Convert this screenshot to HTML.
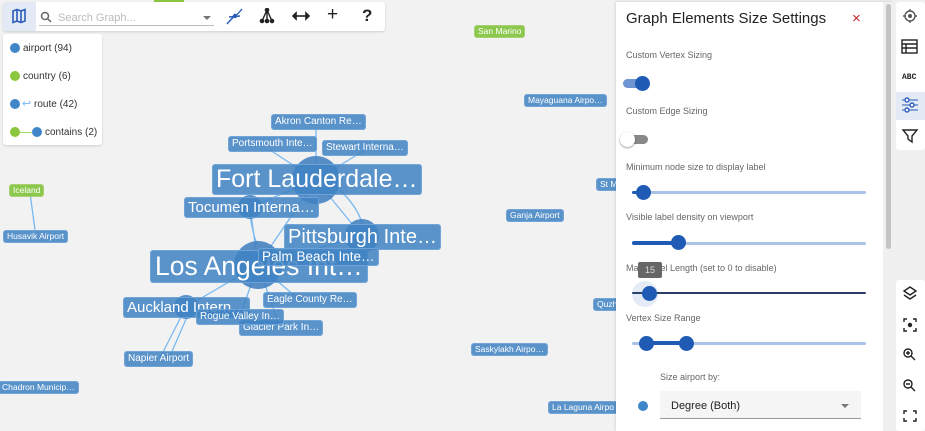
<!DOCTYPE html>
<html><head><style>
*{box-sizing:border-box;margin:0;padding:0}
body{width:925px;height:431px;overflow:hidden;background:#f2f2f2;font-family:"Liberation Sans",sans-serif;position:relative}
.l{position:absolute;background:rgba(64,130,195,.85);color:#fff;border-radius:3px;white-space:nowrap;line-height:1;padding:1px 3px;font-size:10px;border:1px solid rgba(120,170,220,.8)}
.g{background:rgba(130,195,60,.9);border-color:#a8d070}
.c{position:absolute;border-radius:50%;background:rgba(60,125,190,.85)}
.lbl{position:absolute;left:11px;font-size:11px;color:#666}
.sl{position:absolute;left:632px;width:234px;height:3px;background:#a9c2e6;border-radius:2px}
.th{position:absolute;width:15px;height:15px;border-radius:50%;background:#1f5bb5}
</style></head><body>
<svg width="925" height="431" style="position:absolute;left:0;top:0" fill="none" stroke="#7ab8f0" stroke-width="1.3">
<path d="M316 180 L316 128 M316 180 L270 150 M316 180 L365 150 M316 180 L250 207 M316 180 L362 236 M258 265 L250 207 M258 265 L316 180 M258 265 L362 236 M258 265 L186 307 M258 265 L300 300 M258 265 L240 316 M258 265 L280 327 M186 307 L160 358 M190 310 L170 356 M30 193 L35 230"/>
<path d="M340 190 Q360 210 362 225 M250 215 Q254 240 258 245" />
</svg>
<div class="c" style="left:292px;top:156px;width:48px;height:48px"></div>
<div class="c" style="left:234px;top:241px;width:48px;height:48px"></div>
<div class="c" style="left:345px;top:219px;width:34px;height:34px"></div>
<div class="c" style="left:238px;top:195px;width:24px;height:24px"></div>
<div class="c" style="left:174px;top:295px;width:24px;height:24px"></div>
<div class="l g" style="left:474px;top:25px;font-size:8.5px">San Marino</div>
<div class="l" style="left:524px;top:94px;font-size:8.5px">Mayaguana Airpo…</div>
<div class="l" style="left:596px;top:178px;font-size:8.5px">St M</div>
<div class="l" style="left:506px;top:209px;font-size:8.5px">Ganja Airport</div>
<div class="l g" style="left:9px;top:184px;font-size:8.5px">Iceland</div>
<div class="l" style="left:3px;top:230px;font-size:8.5px">Husavik Airport</div>
<div class="l" style="left:593px;top:298px;font-size:8.5px">Quzh</div>
<div class="l" style="left:471px;top:343px;font-size:8.5px">Saskylakh Airpo…</div>
<div class="l" style="left:-2px;top:381px;font-size:8.5px">Chadron Municip…</div>
<div class="l" style="left:548px;top:401px;font-size:8.5px">La Laguna Airpo</div>
<div class="l" style="left:271px;top:114px;font-size:10px;padding:2px 3px">Akron Canton Re…</div>
<div class="l" style="left:228px;top:136px;font-size:10px;padding:2px 3px">Portsmouth Inte…</div>
<div class="l" style="left:322px;top:140px;font-size:10px;padding:2px 3px">Stewart Interna…</div>
<div class="l" style="left:212px;top:164px;font-size:25px;padding:2px 3px">Fort Lauderdale…</div>
<div class="l" style="left:184px;top:197px;font-size:15px;padding:2px 3px">Tocumen Interna…</div>
<div class="l" style="left:284px;top:224px;font-size:20px;padding:2px 3px">Pittsburgh Inte…</div>
<div class="l" style="left:150px;top:250px;font-size:26.5px;padding:2px 4px">Los Angeles Int…</div>
<div class="l" style="left:258px;top:248px;font-size:13.5px;padding:1px 3px">Palm Beach Inte…</div>
<div class="l" style="left:123px;top:297px;font-size:15px;padding:2px 3px">Auckland Intern…</div>
<div class="l" style="left:263px;top:292px;font-size:10px;padding:2px 3px">Eagle County Re…</div>
<div class="l" style="left:239px;top:320px;font-size:10px;padding:2px 3px">Glacier Park In…</div>
<div class="l" style="left:196px;top:309px;font-size:10px;padding:2px 3px">Rogue Valley In…</div>
<div class="l" style="left:124px;top:351px;font-size:10px;padding:2px 3px">Napier Airport</div>
<div style="position:absolute;left:154px;top:0;width:30px;height:2px;background:#8cc63f"></div>
<div style="position:absolute;left:3px;top:2px;width:382px;height:29px;background:#fff;border-radius:3px;box-shadow:0 1px 2px rgba(0,0,0,.15)"></div>
<div style="position:absolute;left:3px;top:2px;width:33px;height:29px;background:#e3eaf5;border-radius:3px 0 0 3px"></div>
<svg style="position:absolute;left:11px;top:8px" width="16" height="16" viewBox="0 0 16 16" fill="none" stroke="#2a5cb8" stroke-width="1.6"><path d="M2 3 L6 1.5 L10 3 L14 1.5 V13 L10 14.5 L6 13 L2 14.5Z M6 1.5V13 M10 3V14.5"/></svg>
<svg style="position:absolute;left:40px;top:11px" width="12" height="12" viewBox="0 0 12 12" fill="none" stroke="#666" stroke-width="1.5"><circle cx="5" cy="5" r="3.5"/><path d="M7.5 7.5L11 11"/></svg>
<div style="position:absolute;left:58px;top:12px;font-size:11px;color:#bbb">Search Graph...</div>
<div style="position:absolute;left:39px;top:25px;width:175px;height:1px;background:#bbb"></div>
<div style="position:absolute;left:203px;top:16px;border:4px solid transparent;border-top-color:#777"></div>
<svg style="position:absolute;left:226px;top:8px" width="17" height="17" viewBox="0 0 17 17" fill="none" stroke="#2a5cb8" stroke-width="1.4"><path d="M1 16 Q6 10 9 8 T16 1 M3 9 L14 8"/><circle cx="9" cy="8" r="1.5"/></svg>
<svg style="position:absolute;left:259px;top:8px" width="16" height="16" viewBox="0 0 16 16" fill="#222" stroke="#222" stroke-width="1.4"><path d="M8 2 L3 13 M8 2 L13 13 M8 2 V13" fill="none"/><circle cx="8" cy="2" r="1.6"/><circle cx="3" cy="13" r="1.6"/><circle cx="8" cy="13" r="1.6"/><circle cx="13" cy="13" r="1.6"/></svg>
<svg style="position:absolute;left:292px;top:10px" width="18" height="12" viewBox="0 0 18 12" fill="#222" stroke="#222" stroke-width="1.6"><path d="M2 6H16"/><path d="M1 6 L4 3 V9Z M17 6 L14 3 V9Z"/></svg>
<div style="position:absolute;left:327px;top:4px;font-size:19px;color:#222">+</div>
<div style="position:absolute;left:362px;top:6px;font-size:17px;font-weight:bold;color:#222">?</div>
<div style="position:absolute;left:3px;top:34px;width:99px;height:111px;background:#fff;border-radius:3px;box-shadow:0 1px 2px rgba(0,0,0,.15);font-size:10px;color:#333">
<div style="position:absolute;left:7px;top:9px;width:10px;height:10px;border-radius:50%;background:#3f86c8"></div><div style="position:absolute;left:20px;top:9px">airport (94)</div>
<div style="position:absolute;left:7px;top:37px;width:10px;height:10px;border-radius:50%;background:#8cc63f"></div><div style="position:absolute;left:20px;top:37px">country (6)</div>
<div style="position:absolute;left:7px;top:65px;width:10px;height:10px;border-radius:50%;background:#3f86c8"></div><div style="position:absolute;left:19px;top:63px;color:#7ab8f0;font-size:11px">↩</div><div style="position:absolute;left:31px;top:65px">route (42)</div>
<div style="position:absolute;left:7px;top:93px;width:10px;height:10px;border-radius:50%;background:#8cc63f"></div><div style="position:absolute;left:17px;top:98px;width:12px;height:1px;background:#9ee060"></div><div style="position:absolute;left:29px;top:93px;width:10px;height:10px;border-radius:50%;background:#3f86c8"></div><div style="position:absolute;left:42px;top:93px">contains (2)</div>
</div>
<div style="position:absolute;left:616px;top:2px;width:277px;height:429px;background:#fff;box-shadow:0 0 3px rgba(0,0,0,.2)"></div>
<div style="position:absolute;left:883px;top:2px;width:10px;height:429px;background:#f0f0f0"></div>
<div style="position:absolute;left:886px;top:4px;width:5px;height:245px;background:#c4c4c4;border-radius:3px"></div>
<div style="position:absolute;left:626px;top:10px;font-size:15px;color:#222">Graph Elements Size Settings</div>
<div style="position:absolute;left:852px;top:10px;font-size:15px;color:#c62828">×</div>
<div class="lbl" style="left:626px;top:50px;font-size:9px;color:#666">Custom Vertex Sizing</div>
<div style="position:absolute;left:623px;top:79px;width:24px;height:9px;background:#6e95d2;border-radius:5px"></div>
<div class="th" style="left:635px;top:76px;width:15px;height:15px"></div>
<div class="lbl" style="left:626px;top:106px;font-size:9px;color:#666">Custom Edge Sizing</div>
<div style="position:absolute;left:623px;top:135px;width:25px;height:9px;background:#888;border-radius:5px"></div>
<div style="position:absolute;left:620px;top:132px;width:15px;height:15px;border-radius:50%;background:#fff;box-shadow:0 1px 2px rgba(0,0,0,.4)"></div>
<div class="lbl" style="left:626px;top:162px;font-size:9px;color:#666">Minimum node size to display label</div>
<div class="sl" style="top:191px"></div><div class="sl" style="top:191px;width:10px;background:#1f5bb5"></div>
<div class="th" style="left:636px;top:185px"></div>
<div class="lbl" style="left:626px;top:212px;font-size:9px;color:#666">Visible label density on viewport</div>
<div class="sl" style="top:242px"></div><div class="sl" style="top:241px;width:47px;height:4px;background:#1f5bb5"></div>
<div class="th" style="left:671px;top:235px"></div>
<div class="lbl" style="left:626px;top:263px;font-size:9px;color:#666">Max Label Length (set to 0 to disable)</div>
<div class="sl" style="top:292px;background:#2c3e66;height:2px"></div>
<div style="position:absolute;left:632px;top:281px;width:26px;height:26px;border-radius:50%;background:rgba(31,91,181,.12)"></div>
<div class="th" style="left:642px;top:286px"></div>
<div style="position:absolute;left:638px;top:262px;width:24px;height:16px;background:#666;border-radius:2px;color:#ddd;font-size:9px;text-align:center;line-height:16px">15</div>
<div class="lbl" style="left:626px;top:313px;font-size:9px;color:#666">Vertex Size Range</div>
<div class="sl" style="top:342px"></div><div class="sl" style="left:646px;top:341px;width:41px;height:4px;background:#1f5bb5"></div>
<div class="th" style="left:639px;top:336px"></div><div class="th" style="left:679px;top:336px"></div>
<div class="lbl" style="left:660px;top:372px;font-size:9px;color:#666">Size airport by:</div>
<div style="position:absolute;left:638px;top:401px;width:10px;height:10px;border-radius:50%;background:#3f86c8"></div>
<div style="position:absolute;left:660px;top:391px;width:201px;height:28px;background:#f5f5f5;border-bottom:1px solid #999"></div>
<div style="position:absolute;left:671px;top:400px;font-size:11px;color:#222">Degree (Both)</div>
<div style="position:absolute;left:841px;top:404px;border:4px solid transparent;border-top-color:#777"></div>
<div style="position:absolute;left:893px;top:0;width:32px;height:431px;background:#f0f0f0"></div>
<div style="position:absolute;left:896px;top:2px;width:29px;height:148px;background:#fff;border-radius:3px"></div>
<div style="position:absolute;left:896px;top:92px;width:29px;height:28px;background:#e3eaf5"></div>
<div style="position:absolute;left:896px;top:280px;width:29px;height:151px;background:#fff;border-radius:3px"></div>
<svg style="position:absolute;left:896px;top:0" width="29" height="431" viewBox="0 0 29 431" fill="none" stroke="#222" stroke-width="1.4">
<circle cx="14" cy="16" r="5" stroke="#555"/><circle cx="14" cy="16" r="2" fill="#555" stroke="none"/><path d="M14 9v2M14 21v2M7 16h2M19 16h2" stroke="#555"/>
<rect x="6" y="40" width="15" height="13"/><path d="M6 44h15M6 48h15M10 44v9"/>
<text x="6" y="79" font-size="8" font-weight="bold" fill="#222" stroke="none" font-family="Liberation Mono">ABC</text>
<path d="M6 100h16M6 105h16M6 110h16" stroke="#2a5cb8" stroke-width="1.1"/><circle cx="11" cy="100" r="2" stroke="#2a5cb8" fill="#fff"/><circle cx="16" cy="105" r="2" stroke="#2a5cb8" fill="#fff"/><circle cx="11" cy="110" r="2" stroke="#2a5cb8" fill="#fff"/>
<path d="M7 130h14l-5 6v6l-4-3v-3z"/>
<path d="M14 287l6 4-6 4-6-4z M8 295l6 4 6-4"/>
<path d="M8 322v-3h3M17 319h3v3M20 328v3h-3M11 331h-3v-3"/><circle cx="14" cy="325" r="1.5" fill="#222"/>
<circle cx="12" cy="353" r="4"/><path d="M15 356l4 4M10 353h4M12 351v4"/>
<circle cx="12" cy="384" r="4"/><path d="M15 387l4 4M10 384h4"/>
<path d="M8 414v-3h3M17 411h3v3M20 418v3h-3M11 421h-3v-3"/>
</svg>
</body></html>
